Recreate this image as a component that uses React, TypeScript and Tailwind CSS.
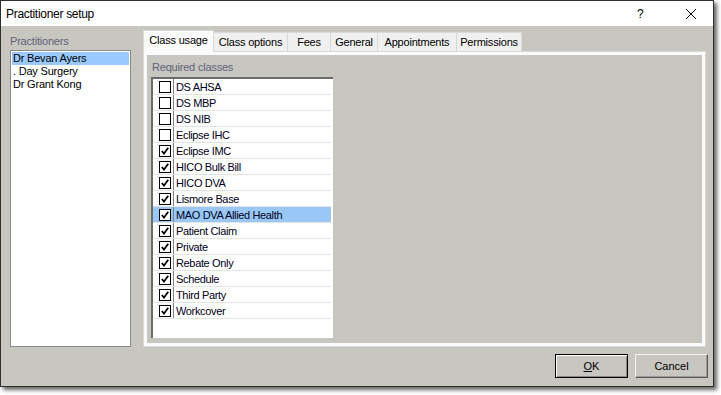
import React from "react";

const classes: { name: string; checked: boolean; selected?: boolean }[] = [
  { name: "DS AHSA", checked: false },
  { name: "DS MBP", checked: false },
  { name: "DS NIB", checked: false },
  { name: "Eclipse IHC", checked: false },
  { name: "Eclipse IMC", checked: true },
  { name: "HICO Bulk Bill", checked: true },
  { name: "HICO DVA", checked: true },
  { name: "Lismore Base", checked: true },
  { name: "MAO DVA Allied Health", checked: true, selected: true },
  { name: "Patient Claim", checked: true },
  { name: "Private", checked: true },
  { name: "Rebate Only", checked: true },
  { name: "Schedule", checked: true },
  { name: "Third Party", checked: true },
  { name: "Workcover", checked: true },
];

const tabs = [
  { label: "Class usage", w: "w-[71px]" },
  { label: "Class options", w: "w-[75px]" },
  { label: "Fees", w: "w-[44px]" },
  { label: "General", w: "w-[48px]" },
  { label: "Appointments", w: "w-[80px]" },
  { label: "Permissions", w: "w-[66px]" },
];

function Check({ checked }: { checked: boolean }) {
  return (
    <div className="w-[12px] h-[12px] border border-black bg-white flex items-center justify-center">
      {checked && (
        <svg width="10" height="10" viewBox="0 0 10 10">
          <path d="M1.8 5 L4 7.6 L8.2 1.8" stroke="black" strokeWidth="1.7" fill="none" />
        </svg>
      )}
    </div>
  );
}

export default function App() {
  const font = { fontFamily: '"Liberation Sans", Arial, sans-serif' };
  return (
    <div className="w-[721px] h-[395px] bg-white" style={font}>
      <div className="w-[714px] h-[387px] border border-[#2e2e2e] flex flex-col shadow-[3px_3px_4px_rgba(0,0,0,0.6)]">
        {/* Title bar */}
        <div className="h-[25px] bg-white flex items-center pl-[5px] text-[12px] tracking-[-0.3px] text-black">
          <span className="flex-1">Practitioner setup</span>
          <span className="w-[12px] text-[12px] mr-[36px]">?</span>
          <svg width="12" height="12" viewBox="0 0 12 12" className="mr-[16px]">
            <path d="M1 1 L11 11 M11 1 L1 11" stroke="black" strokeWidth="1" />
          </svg>
        </div>
        {/* Body */}
        <div className="flex-1 bg-[#c8c6c1] flex flex-col pt-[4px] text-[11px] text-black">
          <div className="flex h-[317px]">
            {/* Left column */}
            <div className="ml-[9px] w-[121px] flex flex-col">
              <div className="h-[20px] pt-[5px] leading-[13px] text-[#5f6378] tracking-[-0.2px]">Practitioners</div>
              <div className="h-[297px] border border-[#8a8a8a] bg-white pt-px px-px">
                <div className="h-[13px] leading-[13px] bg-[#99c9ff] pl-px tracking-[-0.2px]">Dr Bevan Ayers</div>
                <div className="h-[13px] leading-[13px] pl-px tracking-[-0.2px]">. Day Surgery</div>
                <div className="h-[13px] leading-[13px] pl-px tracking-[-0.2px]">Dr Grant Kong</div>
              </div>
            </div>
            {/* Tab control */}
            <div className="ml-[12px] w-[563px] flex flex-col">
              <div className="h-[21px] flex items-end">
                {tabs.map((t, i) =>
                  i === 0 ? (
                    <div
                      key={t.label}
                      className={`${t.w} h-[22px] -mb-px relative z-10 bg-[#fbfbfb] border border-b-0 border-[#d9d9d9] flex items-center justify-center pb-[2px] tracking-[-0.2px]`}
                    >
                      {t.label}
                    </div>
                  ) : (
                    <div
                      key={t.label}
                      className={`${t.w} h-[19px] bg-[#f0f0f0] border border-b-0 border-[#d9d9d9] -ml-px flex items-center justify-center tracking-[-0.2px]`}
                    >
                      {t.label}
                    </div>
                  )
                )}
              </div>
              <div className="h-[296px] border border-[#d9d9d9] bg-[#fbfbfb] p-[3px]">
                <div className="h-full bg-[#c8c6c1] pl-[4px] flex flex-col">
                  <div className="h-[19px] pt-[6px] leading-[13px] pl-px text-[#5f6378] tracking-[-0.2px]">Required classes</div>
                  <div className="mt-[3px] w-[182px] h-[261px] bg-white border-t-2 border-l-2 border-[#6b6b6b] flex flex-col">
                    {classes.map((c) => (
                      <div
                        key={c.name}
                        className={`h-[16px] flex border-b border-[#e3e3e3] mr-[2px] ${c.selected ? "bg-[#99c8f7]" : ""}`}
                      >
                        <div className="w-[21px] h-full border-r border-[#808080] flex items-center pl-[6px] pt-px">
                          <Check checked={c.checked} />
                        </div>
                        <div className="pl-[2px] pt-px leading-[15px] tracking-[-0.35px] text-[#000020]">{c.name}</div>
                      </div>
                    ))}
                  </div>
                </div>
              </div>
            </div>
          </div>
          {/* Buttons */}
          <div className="mt-[7px] h-[24px] flex justify-end gap-[7px] pr-[5px]">
            <button className="w-[73px] h-[24px] border border-black bg-[#c8c6c1] shadow-[inset_1px_1px_0_#ffffff,inset_-1px_-1px_0_#8a8a8a] text-[11px] text-black">
              <span className="underline underline-offset-1">O</span>K
            </button>
            <button className="w-[73px] h-[24px] border border-[#5a5a5a] border-t-[#f4f4f4] border-l-[#f4f4f4] bg-[#c8c6c1] shadow-[inset_-1px_-1px_0_#9a9a9a] text-[11px] text-black">
              Cancel
            </button>
          </div>
        </div>
      </div>
    </div>
  );
}
